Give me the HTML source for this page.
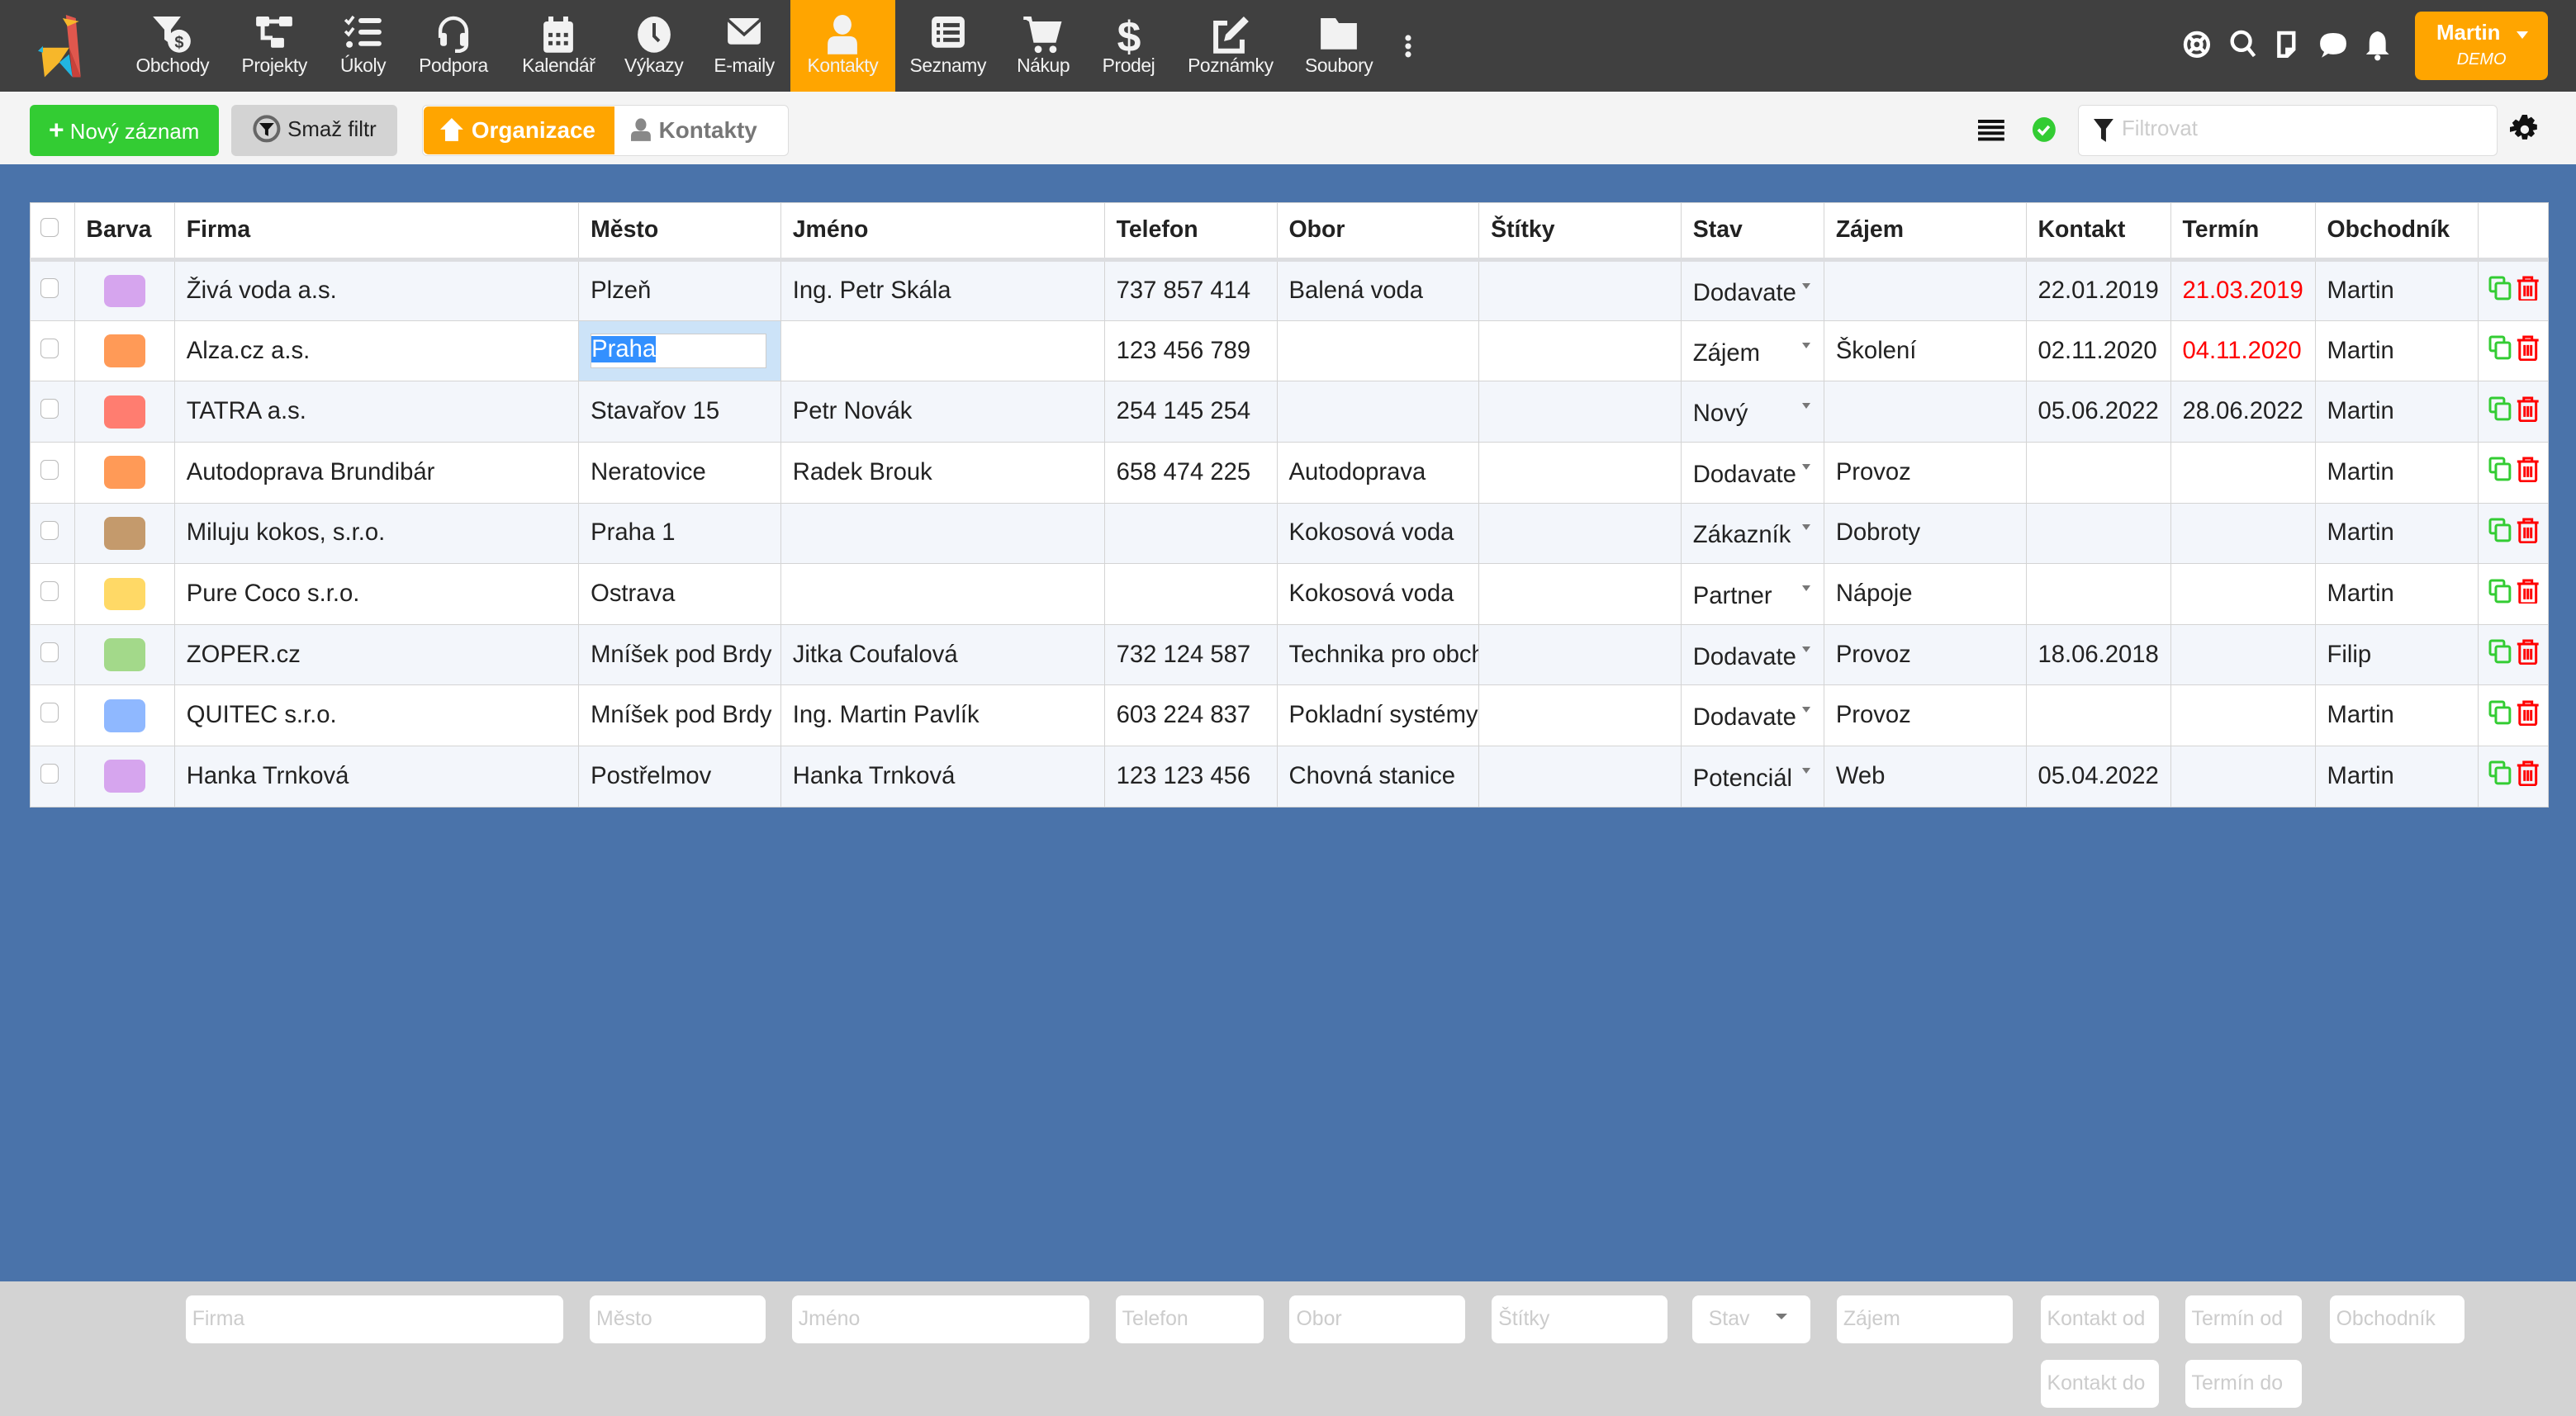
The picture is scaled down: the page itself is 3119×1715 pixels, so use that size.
<!DOCTYPE html>
<html><head><meta charset="utf-8"><style>
*{box-sizing:border-box;margin:0;padding:0}
html,body{width:3119px;height:1715px;overflow:hidden}
body{font-family:"Liberation Sans",sans-serif;background:#4a73aa}
#w{zoom:1.98916;width:1568px;height:862px;position:relative;overflow:hidden}
.top{position:absolute;left:0;top:0;width:1568px;height:56px;background:#404040}
.nav{position:absolute;top:0;height:56px;color:#f2f2f2;font-size:11.5px;text-align:center}
.nav svg{position:absolute;top:9px;left:50%;transform:translateX(-50%)}
.nav span{position:absolute;top:33px;left:0;right:0;white-space:nowrap;letter-spacing:-0.2px}
.tb{position:absolute;left:0;top:56px;width:1568px;height:44px;background:#f4f4f4}
.btn{position:absolute;top:8px;height:31px;border-radius:3px;font-size:13px;line-height:31px}
table{position:absolute;left:18px;top:123px;border-collapse:collapse;table-layout:fixed;width:1533px;background:#fff;font-size:14.7px;color:#222}
td,th{border:1px solid #d4d4d4;padding:0 7px;white-space:nowrap;overflow:hidden;text-align:left}
th{height:35px;font-weight:bold;font-size:14.3px;border-bottom:3px solid #dcdde0}
td{height:37px}
tr.o td{background:#f3f6fb}
.cb{display:inline-block;width:11px;height:12px;border:1px solid #bbb;border-radius:3px;background:#fff}
.sw{display:inline-block;width:25px;height:20px;border-radius:4px;vertical-align:middle}
.red{color:#f00}
.st{position:relative}
.st:after{content:"";position:absolute;right:8px;top:13px;border:3px solid transparent;border-top:4px solid #777}
.ft{position:absolute;left:0;top:780px;width:1568px;height:82px;background:#d3d3d3}
.in{position:absolute;height:29px;background:#fff;border-radius:4px;color:#ccc;font-size:12.5px;line-height:29px;padding-left:4px}
</style></head><body><div id="w">
<div class="top">
<svg style="position:absolute;left:22px;top:7px" width="32" height="42" viewBox="0 0 32 42"><polygon points="18,2 24,4 27,40 20,22" fill="#e0574d"/><polygon points="16,4 26,6 19,9" fill="#f7b72a"/><polygon points="3,22 20,22 14,31 5,40" fill="#f7b72a"/><polygon points="14,31 20,26 22,40" fill="#22b5e0"/><polygon points="20,22 27,40 22,40" fill="#c9413a"/><polygon points="1,24 4,21 4,25" fill="#22b5e0"/></svg>
<div class="nav" style="left:80px;width:50px"><svg width="26" height="24" viewBox="0 0 26 24"><path d="M1 1h17l-6 8v9l-4-3V9z" fill="#f2f2f2"/><circle cx="17" cy="16" r="7" fill="#f2f2f2"/><text x="17" y="20" font-size="10" text-anchor="middle" fill="#404040" font-family="Liberation Sans" font-weight="bold">$</text></svg><span>Obchody</span></div>
<div class="nav" style="left:142px;width:50px"><svg width="24" height="22" viewBox="0 0 24 22"><rect x="1" y="1" width="8" height="6" rx="1" fill="#f2f2f2"/><rect x="15" y="1" width="8" height="6" rx="1" fill="#f2f2f2"/><rect x="10" y="14" width="8" height="6" rx="1" fill="#f2f2f2"/><path d="M5 6v8h6M9 4h6" stroke="#f2f2f2" stroke-width="2.5" fill="none"/></svg><span>Projekty</span></div>
<div class="nav" style="left:200px;width:42px"><svg width="24" height="22" viewBox="0 0 24 22"><path d="M1 3l2 2 3-4M1 10l2 2 3-4" stroke="#f2f2f2" stroke-width="1.8" fill="none"/><circle cx="3.5" cy="18" r="2" fill="#f2f2f2"/><rect x="9" y="2" width="14" height="3" rx="1.5" fill="#f2f2f2"/><rect x="9" y="9" width="14" height="3" rx="1.5" fill="#f2f2f2"/><rect x="9" y="16" width="14" height="3" rx="1.5" fill="#f2f2f2"/></svg><span>Úkoly</span></div>
<div class="nav" style="left:250px;width:52px"><svg width="22" height="24" viewBox="0 0 22 24"><path d="M3 14V10a8 8 0 0116 0v4M19 14v4q0 3-4 4h-3" stroke="#f2f2f2" stroke-width="2.2" fill="none"/><rect x="3" y="11" width="4" height="8" rx="1.5" fill="#f2f2f2"/><rect x="15" y="11" width="4" height="8" rx="1.5" fill="#f2f2f2"/></svg><span>Podpora</span></div>
<div class="nav" style="left:312px;width:56px"><svg width="20" height="24" viewBox="0 0 20 24"><rect x="1" y="4" width="18" height="19" rx="2" fill="#f2f2f2"/><rect x="4" y="1" width="3" height="5" fill="#f2f2f2"/><rect x="13" y="1" width="3" height="5" fill="#f2f2f2"/><g fill="#404040"><rect x="4" y="11" width="2.5" height="2.5"/><rect x="8.7" y="11" width="2.5" height="2.5"/><rect x="13.4" y="11" width="2.5" height="2.5"/><rect x="4" y="16" width="2.5" height="2.5"/><rect x="8.7" y="16" width="2.5" height="2.5"/><rect x="13.4" y="16" width="2.5" height="2.5"/></g></svg><span>Kalendář</span></div>
<div class="nav" style="left:376px;width:44px"><svg width="22" height="24" viewBox="0 0 22 24"><ellipse cx="11" cy="12" rx="10" ry="11" fill="#f2f2f2"/><path d="M11 5v8l3 3" stroke="#404040" stroke-width="2" fill="none"/></svg><span>Výkazy</span></div>
<div class="nav" style="left:430px;width:46px"><svg width="22" height="20" viewBox="0 0 22 20"><rect x="1" y="2" width="20" height="16" rx="2" fill="#f2f2f2"/><path d="M1 3l10 9 10-9" stroke="#404040" stroke-width="1.8" fill="none"/></svg><span>E-maily</span></div>
<div class="nav" style="left:481px;width:64px;background:#ffa500"><svg width="20" height="24" viewBox="0 0 20 24"><ellipse cx="10" cy="6" rx="5.5" ry="6" fill="#f2f2f2"/><path d="M1 24v-6q0-5 5-5h8q5 0 5 5v6z" fill="#f2f2f2"/></svg><span>Kontakty</span></div>
<div class="nav" style="left:550px;width:54px"><svg width="22" height="22" viewBox="0 0 22 22"><rect x="1" y="1" width="20" height="19" rx="3" fill="#f2f2f2"/><g fill="#404040"><rect x="4" y="5" width="2" height="2.5"/><rect x="8" y="5" width="10" height="2.5"/><rect x="4" y="9.5" width="2" height="2.5"/><rect x="8" y="9.5" width="10" height="2.5"/><rect x="4" y="14" width="2" height="2.5"/><rect x="8" y="14" width="10" height="2.5"/></g></svg><span>Seznamy</span></div>
<div class="nav" style="left:612px;width:46px"><svg width="24" height="24" viewBox="0 0 24 24"><path d="M0 2h4l3 14h12l3-11H5" fill="#f2f2f2" stroke="#f2f2f2" stroke-width="2"/><circle cx="9" cy="21" r="2.2" fill="#f2f2f2"/><circle cx="18" cy="21" r="2.2" fill="#f2f2f2"/></svg><span>Nákup</span></div>
<div class="nav" style="left:666px;width:42px"><svg width="16" height="26" viewBox="0 0 16 26"><text x="8" y="22" font-size="26" font-weight="bold" text-anchor="middle" fill="#f2f2f2" font-family="Liberation Sans">$</text></svg><span>Prodej</span></div>
<div class="nav" style="left:718px;width:62px"><svg width="24" height="24" viewBox="0 0 24 24"><path d="M10 5H3v17h16v-7" stroke="#f2f2f2" stroke-width="3" fill="none"/><path d="M20 1l3 3-11 11-4 1 1-4z" fill="#f2f2f2"/></svg><span>Poznámky</span></div>
<div class="nav" style="left:790px;width:50px"><svg width="24" height="22" viewBox="0 0 24 22"><path d="M1 2h9l2 3h11v16H1z" fill="#f2f2f2"/></svg><span>Soubory</span></div>
<svg style="position:absolute;left:854px;top:21px" width="6" height="14"><circle cx="3" cy="2" r="1.8" fill="#f2f2f2"/><circle cx="3" cy="7" r="1.8" fill="#f2f2f2"/><circle cx="3" cy="12" r="1.8" fill="#f2f2f2"/></svg>
<svg style="position:absolute;left:1328px;top:17px" width="130" height="20" viewBox="0 0 130 20"><g stroke="#fff" fill="none" stroke-width="2.2"><circle cx="9" cy="10" r="7"/><circle cx="9" cy="10" r="2.8"/><path d="M4 5l3 3M14 5l-3 3M4 15l3-3M14 15l-3-3"/><circle cx="36" cy="8" r="5.5"/><path d="M40 12l4 5"/><path d="M59 3h9v10l-4 4h-5z"/><path d="M64 17v-4h4"/></g><path d="M92 3q8 0 8 6.5T92 16q-2 0-3-.5L85 18l1.5-3.5Q84 13 84 9.5 84 3 92 3z" fill="#fff"/><path d="M119 2q5 1 5 7v5l2 2h-14l2-2V9q0-6 5-7z" fill="#fff"/><circle cx="119" cy="18" r="1.8" fill="#fff"/></svg>
<div style="position:absolute;left:1470px;top:7px;width:81px;height:42px;background:#ffa500;border-radius:4px;color:#fff;text-align:center"><div style="font-weight:bold;font-size:13px;margin-top:6px;padding-right:16px">Martin</div><div style="position:absolute;right:12px;top:12px;border:4px solid transparent;border-top:5px solid #fff"></div><div style="font-style:italic;font-size:10px;margin-top:3px">DEMO</div></div>
</div>
<div class="tb">
<div class="btn" style="left:18px;width:115px;background:#33cc33;color:#fff;text-align:center"><b style="font-size:16px;font-weight:bold">+</b> Nový záznam</div>
<div class="btn" style="left:141px;width:101px;background:#d3d3d3;color:#222;padding-left:13px"><svg style="vertical-align:-4px;margin-right:4px" width="17" height="17" viewBox="0 0 17 17"><circle cx="8.5" cy="8.5" r="7.3" stroke="#666" stroke-width="2" fill="none"/><path d="M4 5h9l-3.5 4v4l-2-1V9z" fill="#111"/></svg>Smaž filtr</div>
<div class="btn" style="left:257px;width:223px;background:#fff;border:1px solid #ddd"></div>
<div class="btn" style="left:258px;top:9px;height:29px;line-height:29px;width:116px;background:#ffa500;color:#fff;font-weight:bold;font-size:14px;padding-left:10px;border-radius:3px 0 0 3px"><svg style="vertical-align:-2px;margin-right:5px" width="14" height="14" viewBox="0 0 14 14"><path d="M7 0l7 7h-3v7H3V7H0z" fill="#fff"/></svg>Organizace</div>
<div class="btn" style="left:384px;top:9px;height:29px;line-height:29px;color:#777;font-weight:bold;font-size:14px"><svg style="vertical-align:-2px;margin-right:5px" width="12" height="14" viewBox="0 0 12 14"><ellipse cx="6" cy="4" rx="3.3" ry="3.8" fill="#888"/><path d="M0 14v-3q0-3 3-3h6q3 0 3 3v3z" fill="#888"/></svg>Kontakty</div>
<svg style="position:absolute;left:1204px;top:17px" width="16" height="13"><g fill="#111"><rect y="0" width="16" height="2"/><rect y="3.6" width="16" height="2"/><rect y="7.2" width="16" height="2"/><rect y="10.8" width="16" height="2"/></g></svg>
<svg style="position:absolute;left:1236px;top:15px" width="16" height="16"><ellipse cx="8" cy="8" rx="7" ry="7.5" fill="#33cc33"/><path d="M4.5 8l2.5 2.5 4-4.5" stroke="#fff" stroke-width="1.8" fill="none"/></svg>
<div style="position:absolute;left:1265px;top:8px;width:255px;height:31px;background:#fff;border:1px solid #ddd;border-radius:3px;color:#ccc;font-size:13px;line-height:29px;padding-left:26px">Filtrovat<svg style="position:absolute;left:9px;top:8px" width="12" height="14"><path d="M0 0h12l-4.5 6v8l-3-2V6z" fill="#222"/></svg></div>
<svg style="position:absolute;left:1528px;top:14px" width="18" height="18" viewBox="0 0 18 18"><path d="M7.5 0h3l.5 2.5 2-1.2 2.1 2.1-1.2 2 2.6.6v3l-2.6.5 1.2 2-2.1 2.1-2-1.2-.5 2.6h-3l-.5-2.6-2 1.2-2.1-2.1 1.2-2L0 10.5v-3l2.6-.6-1.2-2 2.1-2.1 2 1.2z" fill="#111"/><circle cx="9" cy="9" r="2.6" fill="#f4f4f4"/></svg>
</div>
<div style="position:absolute;left:18px;top:123px;width:1533px;height:367px;border-radius:4px;background:#fff"></div>
<table>
<colgroup><col style="width:27px"><col style="width:61px"><col style="width:246px"><col style="width:123px"><col style="width:197px"><col style="width:105px"><col style="width:123px"><col style="width:123px"><col style="width:87px"><col style="width:123px"><col style="width:88px"><col style="width:88px"><col style="width:99px"><col style="width:43px"></colgroup>
<tr><th style="padding:0 6px"><span class="cb"></span></th><th>Barva</th><th>Firma</th><th>Město</th><th>Jméno</th><th>Telefon</th><th>Obor</th><th>Štítky</th><th>Stav</th><th>Zájem</th><th>Kontakt</th><th>Termín</th><th>Obchodník</th><th></th></tr>
<tbody id="tb"></tbody>
</table>
<div class="ft">
<div class="in" style="left:113px;top:9px;width:230px">Firma</div>
<div class="in" style="left:359px;top:9px;width:107px">Město</div>
<div class="in" style="left:482px;top:9px;width:181px">Jméno</div>
<div class="in" style="left:679px;top:9px;width:90px">Telefon</div>
<div class="in" style="left:785px;top:9px;width:107px">Obor</div>
<div class="in" style="left:908px;top:9px;width:107px">Štítky</div>
<div class="in" style="left:1030px;top:9px;width:72px;padding-left:10px">Stav<div style="position:absolute;right:14px;top:11px;border:4px solid transparent;border-top:4px solid #777"></div></div>
<div class="in" style="left:1118px;top:9px;width:107px">Zájem</div>
<div class="in" style="left:1242px;top:9px;width:72px">Kontakt od</div>
<div class="in" style="left:1330px;top:9px;width:71px">Termín od</div>
<div class="in" style="left:1418px;top:9px;width:82px">Obchodník</div>
<div class="in" style="left:1242px;top:48px;width:72px">Kontakt do</div>
<div class="in" style="left:1330px;top:48px;width:71px">Termín do</div>
</div>
</div>
<script>
var R=[["#d6a5ee","Živá voda a.s.","Plzeň","Ing. Petr Skála","737 857 414","Balená voda","Dodavatel","","22.01.2019","21.03.2019",1,"Martin"],
["#ff9a57","Alza.cz a.s.","PRAHA","","123 456 789","","Zájem","Školení","02.11.2020","04.11.2020",1,"Martin"],
["#ff7d70","TATRA a.s.","Stavařov 15","Petr Novák","254 145 254","","Nový","","05.06.2022","28.06.2022",0,"Martin"],
["#ff9a57","Autodoprava Brundibár","Neratovice","Radek Brouk","658 474 225","Autodoprava","Dodavatel","Provoz","","",0,"Martin"],
["#c49a6c","Miluju kokos, s.r.o.","Praha 1","","","Kokosová voda","Zákazník","Dobroty","","",0,"Martin"],
["#ffd966","Pure Coco s.r.o.","Ostrava","","","Kokosová voda","Partner","Nápoje","","",0,"Martin"],
["#a3d98a","ZOPER.cz","Mníšek pod Brdy","Jitka Coufalová","732 124 587","Technika pro obchod","Dodavatel","Provoz","18.06.2018","",0,"Filip"],
["#8fb8ff","QUITEC s.r.o.","Mníšek pod Brdy","Ing. Martin Pavlík","603 224 837","Pokladní systémy","Dodavatel","Provoz","","",0,"Martin"],
["#d6a5ee","Hanka Trnková","Postřelmov","Hanka Trnková","123 123 456","Chovná stanice","Potenciál","Web","05.04.2022","",0,"Martin"]];
var act='<svg width="34" height="16" viewBox="0 0 34 16"><g stroke="#33cc33" stroke-width="1.5" fill="none"><path d="M5 10H2.5a1 1 0 01-1-1V2.5a1 1 0 011-1H9a1 1 0 011 1V5"/><rect x="5" y="5" width="8.5" height="9.5" rx="1"/></g><g stroke="#f00" stroke-width="1.5" fill="none"><path d="M18 3.5h13M22 3.5V1.5h5v2M19.5 4v10.5a1 1 0 001 1h8a1 1 0 001-1V4M22.5 6.5v6.5M24.5 6.5v6.5M26.5 6.5v6.5"/></g></svg>';
var h='';R.forEach(function(r,i){
var m=r[2]=="PRAHA"?'<td style="background:#cce3f8;padding:0 7px"><span style="display:inline-block;width:107px;height:21px;background:#fff;border:1px solid #ccc;vertical-align:middle;line-height:19px"><span style="background:#3390ff;color:#fff">Praha</span></span></td>':'<td>'+r[2]+'</td>';
var s=r[6]=="Dodavatel"?"Dodavate":r[6];
h+='<tr'+(i%2==0?' class="o"':'')+'><td style="padding:0 6px"><span class="cb"></span></td><td style="text-align:center;padding:0"><span class="sw" style="background:'+r[0]+'"></span></td><td>'+r[1]+'</td>'+m+'<td>'+r[3]+'</td><td>'+r[4]+'</td><td style="padding-right:0">'+r[5]+'</td><td></td><td class="st" style="padding-top:3px">'+s+'</td><td>'+r[7]+'</td><td>'+r[8]+'</td><td'+(r[10]?' class="red"':'')+'>'+r[9]+'</td><td>'+r[11]+'</td><td style="padding:0 0 0 6px">'+act+'</td></tr>';});
document.getElementById('tb').innerHTML=h;
</script>
</body></html>
